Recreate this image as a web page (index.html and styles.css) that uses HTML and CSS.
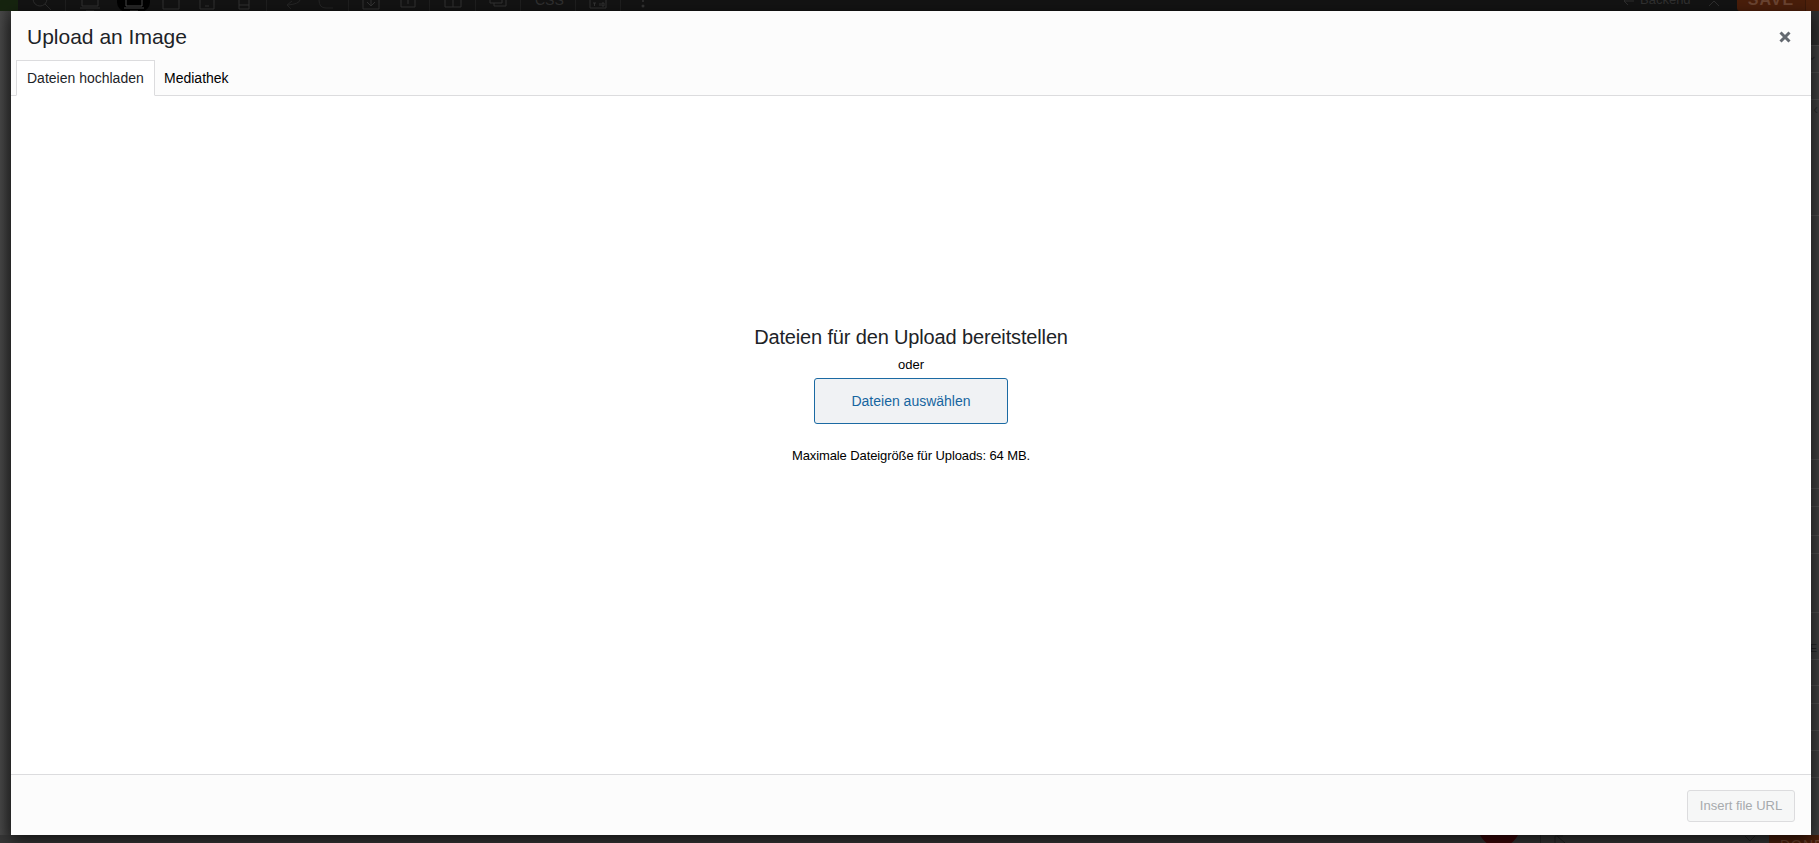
FILE: index.html
```html
<!DOCTYPE html>
<html lang="de">
<head>
<meta charset="utf-8">
<title>Upload an Image</title>
<link rel="stylesheet" href="styles.css">
</head>
<body>
<div class="page">
  <header class="toolbar">
    <div class="logo"></div>
    <div class="tools">
      <svg class="tool t-search" viewBox="0 0 20 20"><circle cx="8" cy="-1" r="7"/><path d="M13 4l6 6"/></svg>
      <i class="sep s1"></i>
      <svg class="tool t-monitor" viewBox="0 0 20 12"><path d="M2 0v6h16V0M0 8h20M6 11h8"/></svg>
      <span class="active-pill"><svg class="tool t-monitor" viewBox="0 0 20 12"><path d="M2 0v6h16V0M0 8h20M6 11h8"/></svg></span>
      <svg class="tool t-land" viewBox="0 0 18 10"><path d="M1 0v9h16V0"/></svg>
      <svg class="tool t-tablet" viewBox="0 0 16 10"><path d="M1 0v9h14V0M6 6h4"/></svg>
      <svg class="tool t-phone" viewBox="0 0 12 10"><path d="M1 0v9h10V0M1 5h10"/></svg>
      <i class="sep s2"></i>
      <svg class="tool t-undo" viewBox="0 0 16 10"><path d="M15 0Q14 4 3 5M7 1L2 5l4 4"/></svg>
      <svg class="tool t-redo" viewBox="0 0 16 10"><path d="M1 0Q1 8 8 8h7"/></svg>
      <i class="sep s3"></i>
      <svg class="tool t-down" viewBox="0 0 18 10"><path d="M1 0v9h16V0M9 0v6M5 2l4 4 4-4"/></svg>
      <svg class="tool t-up" viewBox="0 0 16 10"><path d="M1 0v7h14V0M8 0v4"/></svg>
      <i class="sep s4"></i>
      <svg class="tool t-cols" viewBox="0 0 18 10"><path d="M1 0v7h16V0M9 0v7"/></svg>
      <i class="sep s5"></i>
      <svg class="tool t-copy" viewBox="0 0 18 10"><path d="M1 0v3h12V0M5 3v3h12V0"/></svg>
      <i class="sep s6"></i>
      <span class="css-label">CSS</span>
      <i class="sep s7"></i>
      <svg class="tool t-type" viewBox="0 0 18 10"><path d="M1 0v8h16V0M4 3h3M5.500 3v3M11 3v3M13 3h2v3h-2z"/></svg>
      <i class="sep s8"></i>
      <svg class="tool t-dots" viewBox="0 0 6 10"><circle cx="3" cy="1" r="1"/><circle cx="3" cy="6" r="1.500"/></svg>
    </div>
    <div class="actions">
      <svg class="tool t-back" viewBox="0 0 12 10"><path d="M12 1H2M6-3L2 1l4 4"/></svg>
      <span class="backend">Backend</span>
      <svg class="tool t-chev" viewBox="0 0 12 10"><path d="M1 6l5-5 5 5"/></svg>
      <span class="save">SAVE</span>
      <span class="save-more"></span>
    </div>
  </header>

  <div class="workspace">
    <main class="canvas"></main>
    <aside class="panel">
      <div class="row h30"></div>
      <div class="row h27 chev-row">⌄</div>
      <div class="row h27"></div>
      <div class="row h116 chev-row">‹</div>
      <div class="row h244"></div>
      <div class="row h29"></div>
      <div class="row h18"></div>
      <div class="row h29"></div>
      <div class="row h18"></div>
      <div class="row h59"></div>
      <div class="row h47 letter-row">E</div>
      <div class="row h26"></div>
      <div class="row h18"></div>
      <div class="row h27"></div>
      <div class="row h20"></div>
      <div class="row h27"></div>
    </aside>
  </div>

  <footer class="statusbar">
    <span class="dot"></span>
    <i class="status-sep"></i>
    <svg class="tool t-expand" viewBox="0 0 14 8"><path d="M1 8V1h8M3 1l8 7"/></svg>
    <svg class="tool t-close" viewBox="0 0 12 8"><path d="M1 1l5 5 5-5"/></svg>
    <span class="done">DONE</span>
  </footer>
</div>

<div class="modal" role="dialog" aria-label="Upload an Image">
  <div class="modal-head">
    <div class="title-row">
      <h1 class="title">Upload an Image</h1>
      <button class="close" aria-label="Schließen">
        <svg viewBox="0 0 12 12"><path d="M1.500 1.500l9 9M10.500 1.500l-9 9"/></svg>
      </button>
    </div>
    <nav class="tabs">
      <a class="tab tab-active">Dateien hochladen</a>
      <a class="tab">Mediathek</a>
    </nav>
  </div>
  <div class="modal-body">
    <h2 class="drop-title">Dateien für den Upload bereitstellen</h2>
    <p class="or">oder</p>
    <button class="select-btn">Dateien auswählen</button>
    <p class="max-size">Maximale Dateigröße für Uploads: 64 MB.</p>
  </div>
  <div class="modal-foot">
    <button class="url-btn">Insert file URL</button>
  </div>
</div>
</body>
</html>
```
FILE: styles.css
```css
* { box-sizing: border-box; }

html, body {
  margin: 0;
  height: 100%;
  overflow: hidden;
}

body {
  background: #3f3f3f;
  font-family: "Liberation Sans", Arial, sans-serif;
  color: #1d2327;
}

.page {
  height: 843px;
  display: flex;
  flex-direction: column;
  background: linear-gradient(90deg, #474747 0, #3c3c3c 8px, #333 30px);
}

/* Dimmed toolbar behind the dialog */
.toolbar {
  height: 11px;
  flex: none;
  display: flex;
  background: #131313;
  overflow: hidden;
}

.logo {
  width: 18px;
  flex: none;
  background: #16240f;
}

.tools {
  position: relative;
  flex: 1;
  height: 11px;
}

.tool {
  position: absolute;
  top: 0;
  fill: none;
  stroke: #333;
  stroke-width: 1;
}

.sep {
  position: absolute;
  top: 0;
  width: 1px;
  height: 11px;
  background: #1f1f1f;
}

.t-search { left: 14px; top: 0; width: 20px; height: 20px; stroke: #2c2c2c; }
.t-monitor { left: 62px; width: 20px; height: 12px; }
.active-pill {
  position: absolute;
  left: 99px;
  top: -8px;
  width: 33px;
  height: 20px;
  border-radius: 0 0 10px 10px;
  background: #000;
}
.active-pill .t-monitor { left: 7px; top: 8px; stroke: #4a4a4a; }
.t-land { left: 144px; width: 18px; height: 10px; }
.t-tablet { left: 181px; width: 16px; height: 10px; }
.t-phone { left: 220px; width: 12px; height: 10px; }
.t-undo { left: 267px; width: 16px; height: 10px; stroke: #252525; }
.t-redo { left: 300px; width: 16px; height: 10px; stroke: #252525; }
.t-down { left: 344px; width: 18px; height: 10px; }
.t-up { left: 382px; width: 16px; height: 10px; }
.t-cols { left: 426px; width: 18px; height: 10px; }
.t-copy { left: 471px; width: 18px; height: 10px; }
.t-type { left: 571px; width: 18px; height: 10px; }
.t-dots { left: 622px; width: 6px; height: 10px; fill: #333; stroke: none; }

.s1 { left: 47px; }
.s2 { left: 248px; }
.s3 { left: 330px; }
.s4 { left: 411px; }
.s5 { left: 457px; }
.s6 { left: 502px; }
.s7 { left: 557px; }
.s8 { left: 602px; }

.css-label {
  position: absolute;
  left: 517px;
  top: -8px;
  font-size: 14px;
  line-height: 16px;
  color: #303030;
}

.actions {
  position: relative;
  width: 250px;
  flex: none;
  height: 11px;
}

.t-back { left: 53px; width: 12px; height: 10px; stroke: #2e2e2e; }
.backend {
  position: absolute;
  left: 71px;
  top: -8px;
  font-size: 13px;
  line-height: 16px;
  color: #303030;
}
.t-chev { left: 139px; width: 12px; height: 10px; stroke: #2e2e2e; }
.save {
  position: absolute;
  left: 168px;
  top: -10px;
  width: 68px;
  height: 21px;
  padding-top: 2px;
  border-radius: 0 0 0 3px;
  background: #4a1e0a;
  color: #6b4431;
  font-weight: 700;
  font-size: 16px;
  line-height: 16px;
  text-align: center;
  letter-spacing: 1px;
}
.save-more {
  position: absolute;
  left: 236px;
  top: 0;
  width: 14px;
  height: 11px;
  background: #4f210b;
  border-left: 1px solid #3b1808;
}

.workspace {
  flex: 1;
  min-height: 0;
  display: flex;
}

.canvas { flex: 1; }

.panel {
  width: 30px;
  flex: none;
  background: #3e3e3e;
}

.row {
  border-bottom: 1px solid #4d4d4d;
  color: #222;
  font-size: 14px;
  line-height: 18px;
  text-align: right;
  padding-right: 1px;
}

.chev-row { color: #2a2a2a; }
.letter-row { padding-top: 28px; font-size: 11px; line-height: 14px; padding-right: 2px; }

.h30 { height: 35px; background: #2f2f2f; }
.h27 { height: 27px; }
.h116 { height: 116px; }
.h244 { height: 244px; }
.h29 { height: 29px; }
.h18 { height: 18px; }
.h59 { height: 59px; }
.h47 { height: 47px; }
.h26 { height: 26px; }
.h20 { height: 20px; }

.statusbar {
  position: relative;
  height: 8px;
  flex: none;
  background: #363636;
  overflow: hidden;
}

.dot {
  position: absolute;
  left: 1478px;
  top: -30px;
  width: 42px;
  height: 42px;
  border-radius: 50%;
  background: #3d0608;
}

.status-sep {
  position: absolute;
  left: 1540px;
  top: 0;
  width: 1px;
  height: 8px;
  background: #262626;
}

.t-expand { left: 1554px; width: 14px; height: 8px; stroke: #222; }
.t-close { left: 1744px; width: 12px; height: 8px; stroke: #222; }

.done {
  position: absolute;
  left: 1769px;
  top: 0;
  width: 50px;
  height: 8px;
  padding-left: 11px;
  background: #4a1e0a;
  color: #6b4431;
  font-size: 14px;
  line-height: 20px;
  letter-spacing: 1px;
}

/* Dialog */
.modal {
  position: absolute;
  left: 11px;
  top: 11px;
  width: 1800px;
  height: 824px;
  display: flex;
  flex-direction: column;
  background: #fff;
  box-shadow: 0 5px 15px rgba(0, 0, 0, 0.7);
}

.modal-head {
  height: 85px;
  flex: none;
  display: flex;
  flex-direction: column;
  background: #fcfcfc;
  border-bottom: 1px solid #dcdcde;
}

.title-row {
  height: 49px;
  flex: none;
  display: flex;
  align-items: center;
  justify-content: space-between;
  padding: 2px 20px 0 16px;
}

.title {
  margin: 0;
  font-size: 21px;
  font-weight: 400;
  line-height: 30px;
}

.close {
  width: 12px;
  height: 12px;
  padding: 0;
  border: 0;
  background: none;
  display: block;
}

.close svg {
  display: block;
  width: 12px;
  height: 12px;
  fill: none;
  stroke: #646970;
  stroke-width: 3;
}

.tabs {
  display: flex;
  padding-left: 5px;
  height: 36px;
}

.tab {
  height: 36px;
  padding: 0 8px;
  font-size: 14px;
  line-height: 34px;
  white-space: nowrap;
  color: #000;
  border: 1px solid transparent;
}

.tab-active {
  width: 139px;
  padding-left: 10px;
  background: #fff;
  color: #1d2327;
  border-color: #dcdcde;
  border-bottom-color: #fff;
}

.modal-body {
  flex: 1;
  min-height: 0;
  display: flex;
  flex-direction: column;
  align-items: center;
  padding-top: 227px;
  background: #fff;
}

.drop-title {
  margin: 0;
  font-size: 20px;
  font-weight: 400;
  line-height: 28px;
  letter-spacing: -0.15px;
}

.or {
  margin: 5px 0 0;
  font-size: 13px;
  line-height: 18px;
  color: #000;
}

.select-btn {
  width: 194px;
  height: 46px;
  margin-top: 4px;
  padding: 0;
  border: 1px solid #1b6aa3;
  border-radius: 3px;
  background: #f0f2f4;
  color: #16659f;
  font-family: inherit;
  font-size: 14px;
}

.max-size {
  margin: 23px 0 0;
  font-size: 13px;
  line-height: 18px;
  letter-spacing: -0.1px;
  color: #000;
}

.modal-foot {
  height: 61px;
  flex: none;
  display: flex;
  justify-content: flex-end;
  align-items: flex-start;
  padding: 15px 16px 0 0;
  background: #fcfcfc;
  border-top: 1px solid #dcdcde;
}

.url-btn {
  width: 108px;
  height: 32px;
  padding: 0 0 2px;
  border: 1px solid #dcdcde;
  border-radius: 3px;
  background: #f6f7f7;
  color: #a7aaad;
  font-family: inherit;
  font-size: 13px;
}
```
